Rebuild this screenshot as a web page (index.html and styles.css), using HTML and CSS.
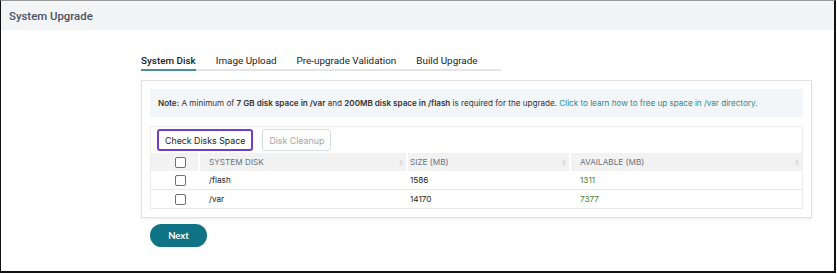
FILE: index.html
```html
<!DOCTYPE html>
<html>
<head>
<meta charset="utf-8">
<link rel="stylesheet" href="styles.css">
</head>
<body>
<div class="frame">
  <div class="header">System Upgrade</div>
  <div class="content">
    <div class="tabs">
      <div class="tab active">System Disk</div>
      <div class="tab">Image Upload</div>
      <div class="tab">Pre-upgrade Validation</div>
      <div class="tab">Build Upgrade</div>
    </div>
    <div class="card">
      <div class="note"><b>Note:</b> A minimum of <b>7 GB disk space in /var</b> and <b>200MB disk space in /flash</b> is required for the upgrade. <span class="link">Click to learn how to free up space in /var directory.</span></div>
      <div class="panel">
        <div class="actions">
          <button class="btn primary">Check Disks Space</button>
          <button class="btn disabled">Disk Cleanup</button>
        </div>
        <div class="table">
          <div class="row head">
            <div class="cell chk"><span class="box"></span></div>
            <div class="cell c1">SYSTEM DISK<span class="sort">⇕</span></div>
            <div class="cell c2">SIZE (MB)<span class="sort">⇕</span></div>
            <div class="cell c3">AVAILABLE (MB)<span class="sort">⇕</span></div>
          </div>
          <div class="row">
            <div class="cell chk"><span class="box"></span></div>
            <div class="cell c1">/flash</div>
            <div class="cell c2">1586</div>
            <div class="cell c3 green">1311</div>
          </div>
          <div class="row">
            <div class="cell chk"><span class="box"></span></div>
            <div class="cell c1">/var</div>
            <div class="cell c2">14170</div>
            <div class="cell c3 green">7377</div>
          </div>
        </div>
      </div>
    </div>
    <button class="next">Next</button>
  </div>
</div>
</body>
</html>
```

FILE: styles.css
```css
* { box-sizing: border-box; }
html, body { margin: 0; padding: 0; background: #fff; }
body { font-family: Inter, "Noto Sans", sans-serif; color: #222; }
.frame {
  width: 836px;
  height: 273px;
  border-top: 1px solid #9a9a9a;
  border-left: 1px solid #111;
  border-right: 2px solid #111;
  border-bottom: 2px solid #111;
  overflow: hidden;
}
.header {
  height: 29px;
  background: #f3f4f6;
  padding-left: 8px;
  display: flex;
  align-items: center;
  font-family: Roboto, sans-serif;
  font-size: 11.4px;
  font-weight: 500;
  color: #4b5262;
}
.content { padding: 22px 0 0 140px; }
.tabs {
  display: flex;
  gap: 20px;
  width: 360px;
  border-bottom: 2px solid #e3e5e8;
  font-family: Roboto, sans-serif;
  font-size: 9.9px;
  line-height: 14px;
  color: #222;
  white-space: nowrap;
}
.tab { flex-shrink: 0; padding: 2px 0 1px; margin-bottom: -2px; border-bottom: 2px solid transparent; }
.tab.active { font-weight: 500; border-bottom-color: #4d8f99; }
.card {
  margin-top: 9px;
  width: 671px;
  border: 1px solid #e2e2e2;
  box-shadow: 0 1px 2px rgba(0,0,0,0.08);
  padding: 8px;
}
.note {
  background: #f3f6f8;
  height: 28px;
  line-height: 28px;
  padding-left: 8px;
  font-size: 8.1px;
  color: #333;
  white-space: nowrap;
}
.note b { font-weight: 600; }
.link { color: #2b8795; }
.panel {
  margin-top: 9px;
  border: 1px solid #ececec;
  border-bottom: none;
}
.actions { display: flex; gap: 9px; padding: 0 6px; height: 26px; align-items: center; }
.btn {
  font-family: inherit;
  font-size: 8.8px;
  height: 22px;
  padding: 0 6px;
  background: #fff;
  border-radius: 3px;
}
.btn.primary { border: 2px solid #6d3fd0; color: #222; }
.btn.disabled { border: 1px solid #d5dde2; color: #a0a6ab; }
.table { font-size: 8.2px; }
.row { display: flex; height: 19px; border-bottom: 1px solid #e8e8e8; align-items: stretch; }
.row.head { height: 18px; background: #f2f2f2; border-bottom: none; color: #6a7180; }
.cell { display: flex; align-items: center; position: relative; }
.chk { width: 47px; justify-content: center; padding-left: 12px; }
.c1 { width: 208px; padding-left: 9px; border-left: 2px solid transparent; }
.c2 { width: 163px; padding-left: 2px; border-left: 2px solid transparent; }
.c3 { flex: 1; padding-left: 9px; border-left: 2px solid transparent; }
.head .c1, .head .c2, .head .c3 { border-left-color: #fff; }
.green { color: #3b8232; }
.box {
  width: 11px; height: 11px;
  border: 1px solid #6f6f6f;
  border-radius: 2px;
  background: #fff;
}
.sort {
  position: absolute;
  right: 2px;
  font-size: 7px;
  color: #cdcdcd;
}
.next {
  margin: 6px 0 0 9px;
  width: 57px;
  height: 23px;
  border: none;
  border-radius: 12px;
  background: #0e7385;
  color: #fff;
  font-family: Lato, sans-serif;
  font-weight: 700;
  font-size: 9.5px;
}
```
